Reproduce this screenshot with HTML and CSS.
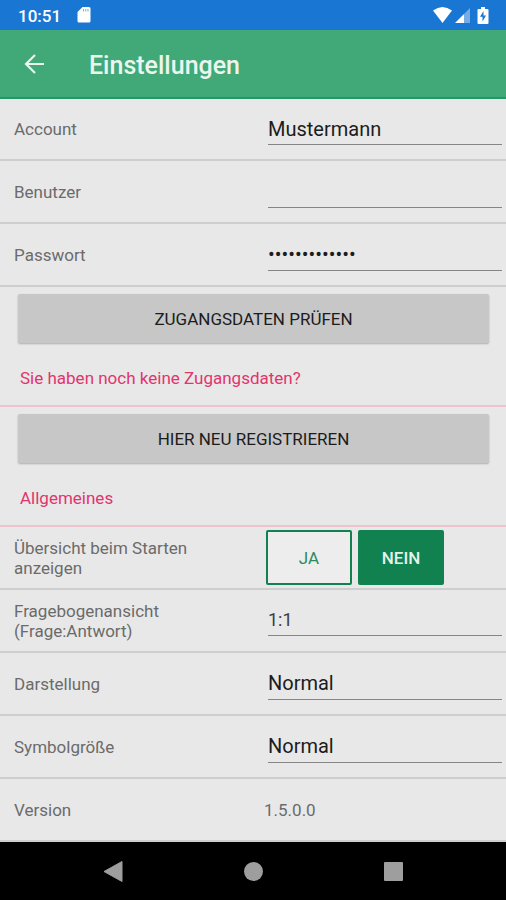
FILE: index.html
```html
<!DOCTYPE html>
<html lang="de">
<head>
<meta charset="utf-8">
<meta name="viewport" content="width=device-width, initial-scale=1">
<title>Einstellungen</title>
<link rel="stylesheet" href="styles.css">
</head>
<body>
<div class="statusbar">
  <span class="clock">10:51</span>
  <svg class="sd" width="14" height="16" viewBox="0 0 14 16" aria-hidden="true"><path fill="#fff" d="M5.500 0H12Q13.500 0 13.500 1.500V14Q13.500 15.500 12 15.500H2Q.5 15.500 .5 14V5Z"/><path stroke="#1976d2" stroke-opacity=".6" d="M6.500 2v2.500M8.800 2v2.500M11 2v2.500"/></svg>
  <svg class="signals" width="58" height="18" viewBox="0 0 58 18" aria-hidden="true">
    <path fill="#fff" d="M1 4.500Q10.500-2.500 20 4.500L10.500 17Z"/>
    <path fill="#fff" d="M23 17L32 8V17Z"/>
    <path fill="#fff" fill-opacity=".4" d="M32 8L38 2V17H32Z"/>
    <path fill="#fff" d="M49 1h4v2h2.500q1 0 1 1V17q0 1-1 1h-9q-1 0-1-1V4q0-1 1-1H49Z"/>
    <path fill="#1976d2" d="M51.500 5L48 10.800h2.500V15.500L54 9.500H51.500Z"/>
  </svg>
</div>
<header class="appbar">
  <button class="back" type="button" aria-label="Zurück">
    <svg width="20" height="20" viewBox="0 0 20 20" aria-hidden="true"><path fill="none" stroke="#eaf5ee" stroke-width="2.200" d="M20 10H2M11 1L2 10L11 19"/></svg>
  </button>
  <h1>Einstellungen</h1>
</header>
<main>
  <div class="row first">
    <label for="account">Account</label>
    <input class="field" id="account" type="text" value="Mustermann">
  </div>
  <div class="row">
    <label for="user">Benutzer</label>
    <input class="field" id="user" type="text">
  </div>
  <div class="row">
    <label for="password">Passwort</label>
    <input class="field" id="password" type="password" value="mustermann123">
  </div>
  <section class="group">
    <button class="action" type="button">ZUGANGSDATEN PRÜFEN</button>
    <h2>Sie haben noch keine Zugangsdaten?</h2>
  </section>
  <section class="group">
    <button class="action" type="button">HIER NEU REGISTRIEREN</button>
    <h2>Allgemeines</h2>
  </section>
  <div class="row">
    <span class="name" id="overview">Übersicht beim Starten anzeigen</span>
    <div class="toggle" role="group" aria-labelledby="overview">
      <button type="button" aria-pressed="false">JA</button>
      <button class="on" type="button" aria-pressed="true">NEIN</button>
    </div>
  </div>
  <div class="row">
    <label for="ratio">Fragebogenansicht (Frage:Antwort)</label>
    <select class="field compact" id="ratio"><option>1:1</option></select>
  </div>
  <div class="row">
    <label for="display">Darstellung</label>
    <select class="field" id="display"><option>Normal</option></select>
  </div>
  <div class="row">
    <label for="symbols">Symbolgröße</label>
    <select class="field" id="symbols"><option>Normal</option></select>
  </div>
  <div class="row">
    <span class="name">Version</span>
    <span class="value">1.5.0.0</span>
  </div>
</main>
<nav class="navbar" aria-label="System">
  <button type="button" aria-label="Zurück"><svg width="24" height="24" viewBox="0 0 24 24"><path fill="#9e9e9e" d="M21 2.500V22.500L3 12.500Z" stroke="#9e9e9e" stroke-linejoin="round"/></svg></button>
  <button type="button" aria-label="Startseite"><svg width="24" height="24" viewBox="0 0 24 24"><circle cx="12.500" cy="12.500" r="9.500" fill="#9e9e9e"/></svg></button>
  <button type="button" aria-label="Übersicht"><svg width="24" height="24" viewBox="0 0 24 24"><rect x="3" y="3" width="19" height="19" rx="1" fill="#9e9e9e"/></svg></button>
</nav>
</body>
</html>
```
FILE: styles.css
```css
* {
  box-sizing: border-box;
}

body {
  margin: 0;
  min-height: 100vh;
  display: flex;
  flex-direction: column;
  background: #e8e8e8;
  color: #6b6b6b;
  font: 17px/20px Roboto, "Liberation Sans", sans-serif;
}

button {
  border: 0;
  padding: 0;
  background: none;
  font: inherit;
}

svg {
  display: block;
}

.statusbar {
  display: flex;
  align-items: center;
  height: 30px;
  padding: 0 16px 0 18px;
  background: #1976d2;
  color: #fff;
}

.clock {
  padding-top: 2px;
  font-weight: 500;
}

.sd {
  margin-left: 16px;
}

.signals {
  margin-left: auto;
}

.appbar {
  display: flex;
  align-items: center;
  height: 69px;
  padding-left: 24px;
  background: #41a878;
  border-bottom: 2px solid #1f9b67;
}

.appbar h1 {
  margin: 0 0 0 45px;
  padding-top: 4px;
  color: #eaf5ee;
  font-size: 25px;
  font-weight: 500;
  line-height: 32px;
}

main {
  flex: 1;
}

.row {
  display: grid;
  grid-template-columns: 12fr 11fr;
  align-items: center;
  min-height: 63px;
  border-bottom: 2px solid #cecece;
}

.row.first {
  min-height: 62px;
}

.row label,
.name {
  padding: 0 60px 0 14px;
}

.field {
  min-width: 0;
  height: 32px;
  margin: 0 4px;
  padding: 0;
  border: 0;
  border-bottom: 1px solid #858585;
  border-radius: 0;
  outline: 0;
  appearance: none;
  background: none;
  color: #1c1c1c;
  font: 20px/24px Roboto, "Liberation Sans", sans-serif;
}

.field.compact {
  height: 30px;
  color: #3c3c3c;
  font-size: 18px;
}

.group {
  display: flex;
  flex-direction: column;
  min-height: 120px;
  padding: 7px 17px 0 18px;
  border-bottom: 2px solid #eec3cd;
}

.action {
  height: 49px;
  border-radius: 2px;
  background: #c7c7c7;
  box-shadow: 0 1px 2px #00000040;
  color: #1c1c1c;
  font-size: 17px;
}

.group h2 {
  margin: 25px 2px 0;
  color: #e0356f;
  font-size: 17px;
  font-weight: 400;
  line-height: 20px;
}

.toggle {
  display: flex;
  gap: 6px;
  padding-left: 2px;
}

.toggle button {
  width: 86px;
  height: 55px;
  border: 2px solid #11814f;
  border-radius: 2px;
  background: #ededed;
  color: #2f8a60;
  font-size: 17px;
}

.toggle .on {
  background: #11814f;
  color: #e4f2ea;
  font-weight: 500;
}

.navbar {
  display: flex;
  align-items: center;
  justify-content: center;
  gap: 116px;
  height: 58px;
  background: #000;
}
```
